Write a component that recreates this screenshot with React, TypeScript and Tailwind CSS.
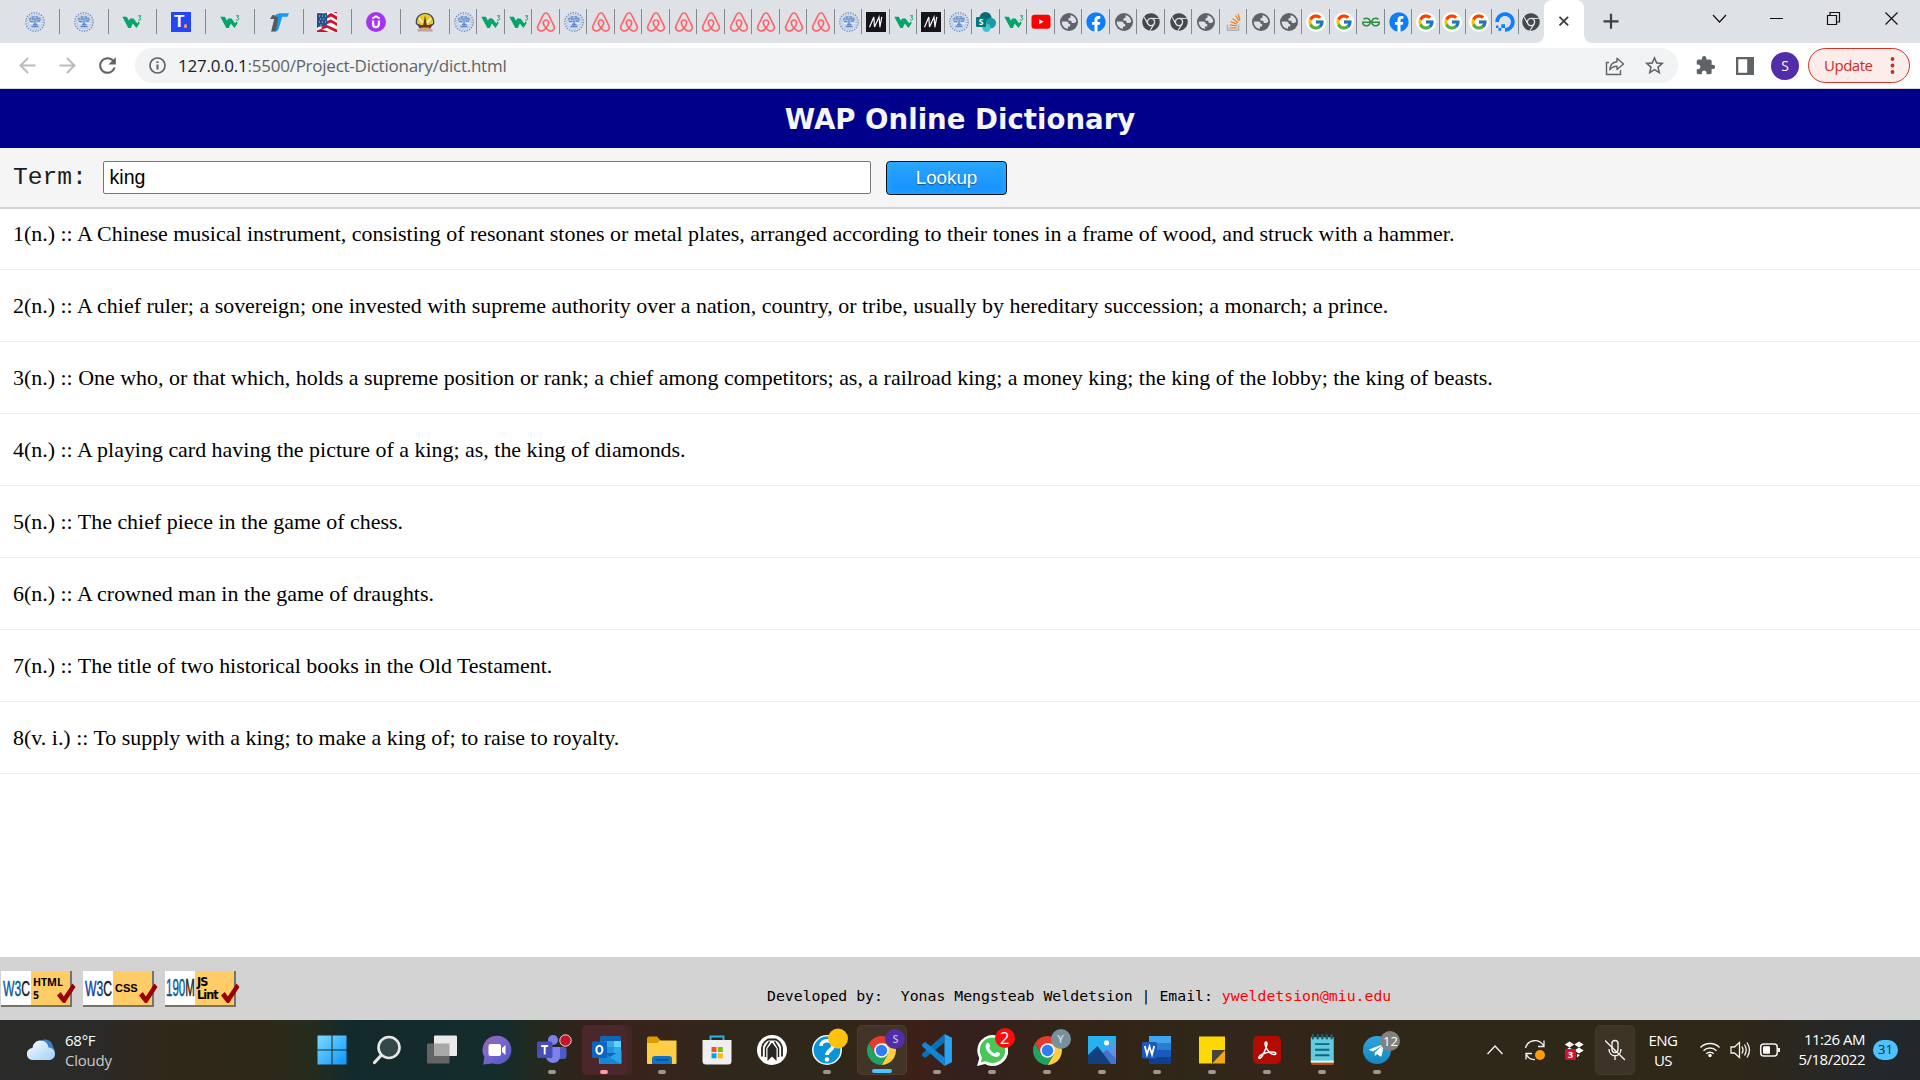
import React from "react";
import {
  FaAirbnb,
  FaChrome,
  FaDigitalOcean,
  FaFacebook,
  FaTelegramPlane,
} from "react-icons/fa";
import { FcGoogle } from "react-icons/fc";
import { SiGeeksforgeeks } from "react-icons/si";
import { MdExtension, MdRefresh, MdStarBorder } from "react-icons/md";

/* ---------- tab favicons ---------- */

const Seal = () => (
  <svg viewBox="0 0 20 20" className="size-5" fill="none" stroke="#6c92d0">
    <circle cx="10" cy="10" r="6.8" fill="#cbd7ec" stroke="none" />
    <circle cx="10" cy="10" r="9.200" strokeWidth="1.400" strokeDasharray="1.400 1.200" />
    <circle cx="10" cy="10" r="7.400" strokeWidth="1" strokeDasharray="1 1.400" opacity=".6" />
    <path d="M4.500 8.500c0-2 2-3.800 5-3.800s5.800 1.400 5.800 3.500" strokeWidth="1.500" strokeDasharray="3 .8" />
    <path d="M5 9.500h3.500M11.500 9h3.500M10 6v7.500M6.500 7h2.500M11 6.800h3M6.500 14.500h7M8 12.500h4.500" strokeWidth="1.300" stroke="#5f88cb" />
    <path d="M5 11.500h3M12.500 11.500h3" strokeWidth="1.200" stroke="#eef2f9" />
  </svg>
);

const W3 = () => (
  <svg viewBox="0 0 20 20" className="size-5">
    <path d="M.3 4.800h4.500l2.200 4 1-2.300h3.500l3.800 5 1.200-2.200 1.200 1.800-3.200 5-3.700-4.600-2 4.600h-2.500z" fill="#04a46c" />
    <path d="M16.200 3.800h2.600l-1.300 1.700c1.500 0 1.800 2.600-.1 2.600-.6 0-1-.1-1.300-.5" fill="none" stroke="#04a46c" strokeWidth="1" />
  </svg>
);

const TDot = () => (
  <span className="relative flex size-5 items-center justify-center bg-[#2545fb] pr-1 font-['Liberation_Sans'] text-[17px] leading-none font-bold text-white">
    T
    <span className="absolute right-1 bottom-1 size-[3.500px] rounded-full bg-[#ffa312]" />
  </span>
);

const BlueT = () => (
  <svg viewBox="0 0 20 20" className="size-5">
    <path d="M2.500 4.500C3 3 4 2.500 6 3.500L9 6 7 19.500H2.200L5.200 7H1z" fill="#555c63" />
    <path d="M6 3.500C8 1.500 10 1.200 12 1.200h8l-1.500 3.600h-5.200L10 15.500c-.8 3-2 4-4.500 4L9.300 6.500z" fill="#169cf4" />
    <path d="m6.500 4 3 1.500L7 18.500l-4.500 1z" fill="#555c63" />
  </svg>
);

const Flag = () => (
  <svg viewBox="0 0 20 20" className="size-5">
    <rect width="20" height="20" fill="#f7f3f4" />
    <path d="M10 3.500 14 1l6 3.500V8l-6-3.500-4 2zM10 9l4-1.500 6 3.500v3l-6-3.500-4 1.500zM16 0h4v1.500zM5 14.500l5-1.500 10 4.500V20h-1.500L10 15.800 4 17.500zM0 18.500l4-1.500 8 3H0z" fill="#c9142b" />
    <path d="M0 1.500C4 0 6 2.500 10 .5V13c-3 2.500-6 0-10 3z" fill="#24538c" />
    <path d="M2 4h.8M5 4h.8M8 4h.8M3.500 7h.8M6.500 7h.8M2 10h.8M5 10h.8M8 10h.8M3.500 13h.8" stroke="#fff" strokeWidth="1" />
  </svg>
);

const Udemy = () => (
  <svg viewBox="0 0 20 20" className="size-5">
    <circle cx="10" cy="10" r="10" fill="#a435f0" />
    <path d="M6.300 6.500 10 4.200l3.700 2.300" fill="none" stroke="#fff" strokeWidth="1.600" />
    <path d="M7.100 8.500v3.800c0 3.800 5.800 3.800 5.800 0V8.500" fill="none" stroke="#fff" strokeWidth="2.200" />
  </svg>
);

const Emblem = () => (
  <svg viewBox="0 0 20 20" className="size-5">
    <path d="M.8 12C0 5 4 1 10 1s10 4 9.200 11l-3 2.500H4z" fill="#3c4560" />
    <path d="M2 11.500C1.500 6 5 2 10 2s8.500 4 8 9.500l-4 1.500H6z" fill="#eacb2e" />
    <path d="M10 3.500 11.800 13H8.200z" fill="#6d3b1d" />
    <path d="M4 6l4 5M16 6l-4 5" stroke="#fbf6c5" strokeWidth="1.500" />
    <path d="M3 13h14l-1.500 3.500h-11z" fill="#7a2d20" />
    <path d="M2.500 18.300h15" stroke="#b9a7a0" strokeWidth="2.500" />
    <path d="M6 15.500h8v2H6z" fill="#d9a36a" />
  </svg>
);

const MBox = () => (
  <svg viewBox="0 0 20 20" className="size-5">
    <rect width="20" height="20" fill="#15141a" />
    <path d="M3.500 15.300 7.800 5l.7 10L13 5l1 10.300M15.800 4.800l-2 10.500" fill="none" stroke="#fff" strokeWidth="1.200" />
  </svg>
);

const SharePoint = () => (
  <svg viewBox="0 0 20 20" className="size-5">
    <circle cx="9.500" cy="6" r="6" fill="#036c70" />
    <circle cx="14.800" cy="11" r="5.200" fill="#1a9ba1" />
    <circle cx="10.500" cy="15.800" r="4.200" fill="#37c6d0" />
    <rect y="5" width="10" height="10" rx="1" fill="#03787c" />
    <text x="5" y="13" textAnchor="middle" fontSize="8.500" fontWeight="700" fontFamily="Open Sans, sans-serif" fill="#fff">S</text>
  </svg>
);

const YouTube = () => (
  <svg viewBox="0 0 20 20" className="size-5">
    <rect x=".5" y="2.800" width="19" height="14" rx="3" fill="#f00" />
    <path d="M8.200 7.300v5L12.600 9.800z" fill="#fff" />
  </svg>
);

const Globe = () => (
  <svg viewBox="0 0 20 20" className="size-5">
    <circle cx="10" cy="10" r="9" fill="#5f6368" />
    <path d="M2.800 9.500h4.400c1.800 0 2.600 1.200 2.600 2.500h1.400v2.400H9v2.300C5.500 16.700 2.600 13.500 2.800 9.500z" fill="#dee1e6" />
    <path d="M11.500 3.200c3.300.6 5.800 3.300 5.800 6.600-1 .9-1.800 1.200-3 1.200-1.600 0-2-.8-2-2.300H9.500V6.300c1.500 0 2-.6 2-1.600z" fill="#dee1e6" />
  </svg>
);
const Airbnb = () => <FaAirbnb className="size-[22px] stroke-[#ff5a60] stroke-[8] text-[#ff5a60]" />;
const Facebook = () => (
  <span className="flex size-5 items-center justify-center rounded-full bg-white">
    <FaFacebook className="size-5 text-[#0f7df5]" />
  </span>
);
const ChromeGray = () => <FaChrome className="size-[18px] text-[#45494d]" />;
const Stack = () => (
  <svg viewBox="0 0 20 20" className="size-5" fill="none">
    <path d="M3.500 12.500v5.700h11v-5.700" stroke="#a9b3bf" strokeWidth="1.500" />
    <path d="M5.500 15.800h7M5.700 12.900l6.900.9M6.700 9.700l6.300 2.500M8.700 6.500l5.300 4.200M11.500 3.500l3.700 5.700M14 1.800l2 6.500" stroke="#f48024" strokeWidth="1.300" />
  </svg>
);
const Google = () => (
  <span className="flex size-5 items-center justify-center rounded-full bg-white">
    <FcGoogle className="size-[18px]" />
  </span>
);
const Geeks = () => <SiGeeksforgeeks className="size-[18px] text-[#2f8d46]" />;
const Ocean = () => <FaDigitalOcean className="size-5 text-[#0f7fff]" />;

const wideTabs = [Seal, Seal, W3, TDot, W3, BlueT, Flag, Udemy, Emblem];
const narrowTabs = [
  Seal, W3, W3, Airbnb, Seal, Airbnb, Airbnb, Airbnb, Airbnb, Airbnb, Airbnb, Airbnb, Airbnb, Airbnb,
  Seal, MBox, W3, MBox, Seal, SharePoint, W3, YouTube, Globe, Facebook, Globe, ChromeGray, ChromeGray,
  Globe, Stack, Globe, Globe, Google, Google, Geeks, Facebook, Google,
];
const tightTabs = [Google, Google, Ocean];

function Tab({ Icon, size }: { Icon: React.FC; size: string }) {
  return (
    <div className={`flex h-[25px] shrink-0 items-center justify-center border-r border-[#85888c] ${size}`}>
      <Icon />
    </div>
  );
}

function TabStrip() {
  return (
    <div className="flex h-[43px] bg-[#dee1e6] pl-[11px]">
      <div className="flex items-start pt-[9px]">
        {wideTabs.map((I, i) => <Tab key={i} Icon={I} size="w-[48.750px]" />)}
        {narrowTabs.map((I, i) => <Tab key={i} Icon={I} size="w-[27.500px] pl-[1px]" />)}
        {tightTabs.map((I, i) => <Tab key={i} Icon={I} size="w-[26.300px]" />)}
        <div className="flex h-[25px] w-[25.500px] items-center justify-center"><ChromeGray /></div>
      </div>
      <svg width="60" height="43" viewBox="0 0 60 43" className="-ml-[10px] w-[60px] shrink-0">
        <path d="M0 43c7 0 10-3 10-10V9c0-6 3-9 9-9h22c6 0 9 3 9 9v24c0 7 3 10 10 10z" fill="#fff" />
        <path d="m25.500 16.800 8.600 8.600m0-8.600-8.600 8.600" stroke="#3c4043" strokeWidth="1.900" />
      </svg>
      <svg width="326" height="43" viewBox="1594 0 326 43" fill="none" className="shrink-0">
        <path d="M1603.500 21.300h15M1611 13.800v15" stroke="#3c4043" strokeWidth="2.200" />
        <path d="m1713 15 6.500 7 6.500-7M1770 18.500h13" stroke="#111" strokeWidth="1.200" />
        <path d="M1827.500 15.500h9v9h-9zM1830 15v-2.500h9.500v9.500H1837" stroke="#111" strokeWidth="1.200" />
        <path d="m1885.500 12.500 12 12m0-12-12 12" stroke="#111" strokeWidth="1.200" />
      </svg>
    </div>
  );
}

function Toolbar() {
  return (
    <div className="flex h-[46px] items-center border-b border-[#d5d7db] bg-white pl-[17px]">
      <svg width="62" height="24" viewBox="17 0 62 24" fill="none" stroke="#babcbe" strokeWidth="1.900" className="shrink-0">
        <path d="M35.500 11.500H20.500M28 4l-7.500 7.500L28 19M59.500 11.500h15M67 4l7.500 7.500L67 19" />
      </svg>
      <MdRefresh className="ml-[16px] size-[25px] text-[#5f6368]" />
      <div className="ml-[15px] flex h-[35px] w-[1543px] items-center rounded-full bg-[#f1f3f4] pr-[12px] pl-[14px]">
        <svg width="17" height="17" viewBox="0 0 17 17" fill="none" stroke="#5f6368" strokeWidth="1.700">
          <circle cx="8.500" cy="8.500" r="7.500" />
          <path d="M8.500 7.500v5M8.500 4.300v1.700" strokeWidth="2" />
        </svg>
        <span className="ml-[12px] font-['Open_Sans'] text-[17px] tracking-[-0.245px] whitespace-pre text-[#5f6368]">
          <span className="text-[#202124]">127.0.0.1</span>:5500/Project-Dictionary/dict.html
        </span>
        <svg width="20" height="20" viewBox="0 0 20 20" fill="none" stroke="#5f6368" strokeWidth="1.400" className="ml-auto">
          <path d="M4 6.500H1.500v12h14V14" />
          <path d="M12 2.200 18.500 8 12 13.500v-3.300c-3.500 0-5.500 1-7.200 3.600.3-4.500 2.700-7.600 7.200-8z" strokeLinejoin="round" />
        </svg>
        <MdStarBorder className="ml-[18px] size-[23px] text-[#5f6368]" />
      </div>
      <MdExtension className="ml-[17px] size-[21px] text-[#5f6368]" />
      <svg width="18" height="18" viewBox="0 0 18 18" className="ml-[20px]">
        <path d="M0 0h18v18H0zM2.300 2.300v13.400h8.900V2.300z" fill="#5f6368" fillRule="evenodd" />
      </svg>
      <div className="ml-[17px] flex size-7 items-center justify-center rounded-full bg-[#512da8] font-['Open_Sans'] text-[14px] text-white">S</div>
      <div className="ml-[9px] flex h-[35px] w-[102px] items-center rounded-full border-[1.500px] border-[#d93025] bg-[#fcecea] pl-[15px] text-[#d12b21]">
        <span className="w-[62px] pb-px font-['Open_Sans'] text-[15px] tracking-[-0.480px]">Update</span>
        <svg width="5" height="17" viewBox="0 0 5 17" className="ml-[4px] fill-[#d12b21]">
          <circle cx="2.500" cy="2" r="1.900" /><circle cx="2.500" cy="8.500" r="1.900" /><circle cx="2.500" cy="15" r="1.900" />
        </svg>
      </div>
    </div>
  );
}

/* ---------- dictionary page ---------- */

const entries = [
  "1(n.) :: A Chinese musical instrument, consisting of resonant stones or metal plates, arranged according to their tones in a frame of wood, and struck with a hammer.",
  "2(n.) :: A chief ruler; a sovereign; one invested with supreme authority over a nation, country, or tribe, usually by hereditary succession; a monarch; a prince.",
  "3(n.) :: One who, or that which, holds a supreme position or rank; a chief among competitors; as, a railroad king; a money king; the king of the lobby; the king of beasts.",
  "4(n.) :: A playing card having the picture of a king; as, the king of diamonds.",
  "5(n.) :: The chief piece in the game of chess.",
  "6(n.) :: A crowned man in the game of draughts.",
  "7(n.) :: The title of two historical books in the Old Testament.",
  "8(v. i.) :: To supply with a king; to make a king of; to raise to royalty.",
];

function Validator({ left, leftClass, children }: { left: React.ReactNode; leftClass: string; children: React.ReactNode }) {
  return (
    <div className="relative flex h-9 w-[71px] border-r-2 border-b-2 border-[#77736b] bg-[#ffcc66]">
      <div className="flex h-full w-[30px] shrink-0 items-center bg-white pl-[2px]">
        <span className={`inline-block w-[26px] origin-left font-['Liberation_Sans'] whitespace-nowrap ${leftClass}`}>{left}</span>
      </div>
      {children}
      <svg width="19" height="21" viewBox="0 0 19 21" className="absolute top-3 -right-[6px]">
        <path d="M0 12.500 3.800 9l3 4.500L15.500.5l3 3.500L8 20H6z" fill="#990000" />
      </svg>
    </div>
  );
}

function Page() {
  return (
    <>
      <header className="flex h-[59px] items-center justify-center bg-[#00008b] pt-[3px]">
        <h1 className="font-['DejaVu_Sans'] text-[27.600px] font-bold whitespace-nowrap text-[#f5f5f5]">WAP Online Dictionary</h1>
      </header>
      <div className="flex h-[61px] items-center border-b-2 border-[#d3d3d3] bg-[#f5f5f5] pl-[13px]">
        <label className="w-[90px] pt-[2px] font-['Liberation_Mono'] text-[24.600px] text-[#1c1c1c]">Term:</label>
        <div className="flex h-[33px] w-[768px] items-center rounded-[2px] border border-[#767676] bg-white pt-px pl-[5.500px] font-['Liberation_Sans'] text-[19.600px] text-black">king</div>
        <button className="ml-[15px] h-[34px] w-[121px] rounded-[4px] border border-[#0b1116] bg-linear-to-b from-[#2ba4fb] to-[#1590ff] pt-px font-['Liberation_Sans'] text-[18.750px] text-white shadow-[inset_0_0_7px_#27b1ff] text-shadow-[0_1px_1px_rgba(0,0,0,0.450)]">
          Lookup
        </button>
      </div>
      <main className="h-[748px] bg-white">
        {entries.map((e, i) => (
          <p key={i} className={`border-b border-[#ececec] pl-[13px] font-['Liberation_Serif'] text-[21.940px] leading-[28px] whitespace-nowrap text-black ${i ? "h-[71.900px] pt-[22px]" : "h-[61.400px] pt-[11px]"}`}>
            {e}
          </p>
        ))}
      </main>
      <footer className="flex h-[63px] bg-[#d3d3d3]">
        <div className="flex gap-[11px] pt-[14px] pl-[1px]">
          <Validator leftClass="scale-x-[0.550] text-[22px] text-[#0b5a9c] [-webkit-text-stroke:0.5px_currentColor]" left={<>W3<span className="text-[#222]">C</span></>}>
            <span className="pt-[5px] pl-[2px] font-['Open_Sans'] text-[10.500px] leading-[13px] font-bold text-black">HTML<br />5</span>
          </Validator>
          <Validator leftClass="scale-x-[0.550] text-[22px] text-[#0f3f9c] [-webkit-text-stroke:0.5px_currentColor]" left={<>W3<span className="text-[#222]">C</span></>}>
            <span className="pt-[7px] pl-[2px] font-['Liberation_Sans'] text-[11px] leading-[20px] font-bold text-black">CSS</span>
          </Validator>
          <Validator leftClass="scale-x-[0.500] text-[23px] -ml-px text-[#0b5a9c] [-webkit-text-stroke:0.5px_currentColor]" left={<>190<span className="text-[#222]">M</span></>}>
            <span className="pt-[4px] pl-[2px] font-['DejaVu_Sans_Condensed'] text-[12.500px] leading-[13px] font-bold tracking-[-0.900px] text-black">JS<br />Lint</span>
          </Validator>
        </div>
        <div className="ml-[531px] pt-[29px] font-['DejaVu_Sans_Mono'] text-[14.820px] leading-[20px] whitespace-pre text-black">
          {"Developed by:  Yonas Mengsteab Weldetsion | Email: "}
          <span className="text-[#ff0000]">yweldetsion@miu.edu</span>
        </div>
      </footer>
    </>
  );
}

/* ---------- taskbar ---------- */

const Start = () => (
  <svg viewBox="0 0 30 30" className="size-[30px]">
    <defs>
      <linearGradient id="win" gradientUnits="userSpaceOnUse" x1="0" y1="0" x2="30" y2="30">
        <stop stopColor="#7fdcff" /><stop offset="1" stopColor="#0a93ff" />
      </linearGradient>
    </defs>
    <path d="M.5.500h14v14H.5zM15.500.500h14v14h-14zM.5 15.500h14v14H.5zM15.500 15.500h14v14h-14z" fill="url(#win)" />
  </svg>
);

const Search = () => (
  <svg viewBox="0 0 30 30" className="size-[30px]" fill="none" stroke="#e8e8e8" strokeLinecap="round">
    <circle cx="17" cy="12.500" r="10.500" strokeWidth="2.600" fill="#34474a" />
    <path d="m9 20.500-6.500 7" strokeWidth="3.200" />
  </svg>
);

const TaskView = () => (
  <svg viewBox="0 0 30 30" className="size-[30px]">
    <rect y="8.500" width="22.500" height="20" rx="1" fill="#646464" />
    <rect x="7" y="0.500" width="23" height="20.500" rx="1" fill="#eaeaea" />
    <rect x="7" y="8.500" width="15.500" height="12.500" fill="#a8a8a8" />
  </svg>
);

const Chat = () => (
  <svg viewBox="0 0 30 30" className="size-[30px]">
    <defs>
      <linearGradient id="chat" x1="0" y1="0" x2="1" y2="1">
        <stop stopColor="#a2638f" /><stop offset=".35" stopColor="#7d68cf" /><stop offset="1" stopColor="#4f55c5" />
      </linearGradient>
    </defs>
    <path d="M15 .8a14.200 14.200 0 1 1-4.500 27.600L1.200 29.500 2.400 22A14.200 14.200 0 0 1 15 .8z" fill="url(#chat)" />
    <rect x="6.500" y="9" width="12.500" height="12" rx="2" fill="#fff" />
    <path d="m20 13 3.500-3v10L20 17z" fill="#fff" />
  </svg>
);

const Teams = () => (
  <svg viewBox="0 0 30 30" className="size-[30px] overflow-visible">
    <circle cx="16" cy="5" r="5" fill="#7b83eb" />
    <rect x="20" y="12" width="9.500" height="12" rx="3" fill="#5059c9" />
    <path d="M9 12h14v9c0 9-13 9-14 1z" fill="#7b83eb" />
    <rect x="0" y="6.500" width="15.500" height="16.500" rx="1.500" fill="#464eb8" />
    <path d="M4.200 11h7M7.700 11v8.500" stroke="#fff" strokeWidth="1.900" />
    <circle cx="28.500" cy="5.500" r="5.700" fill="#c4132b" stroke="#f2dede" strokeWidth="1" />
  </svg>
);

const Outlook = () => (
  <svg viewBox="0 0 30 30" className="size-[30px]">
    <rect x="8" y="1" width="21" height="22" rx="1.500" fill="#1066b5" />
    <path d="M8 6h7v6H8z" fill="#1f88d8" /><path d="M15 6h7v6h-7z" fill="#32a9e7" /><path d="M22 6h7v6h-7z" fill="#5ed4fb" />
    <path d="M15 12h7v6h-7z" fill="#2392dc" /><path d="M22 12h7v6h-7z" fill="#32a9e7" />
    <path d="M7 28.500V15l11 7 11.500-7v13a1 1 0 0 1-1 1H8z" fill="#2aa5ec" />
    <path d="M7 16l22 13H8z" fill="#1487d9" />
    <rect y="6.500" width="15" height="16.500" rx="1.500" fill="#0a66c2" />
    <ellipse cx="7.400" cy="14.700" rx="3" ry="4" fill="none" stroke="#fff" strokeWidth="2.100" />
  </svg>
);

const Explorer = () => (
  <svg viewBox="0 0 30 30" className="size-[30px]">
    <path d="M0 3.500Q0 1.500 2 1.500h8l3.500 4V10H0z" fill="#dc9c05" />
    <path d="M0 8 10 8l3-2.500h16.500V28q0 1-1 1H1q-1 0-1-1z" fill="#fecf45" />
    <path d="M5 29v-5q0-3 3-3h14q3 0 3 3v5z" fill="#1173c5" />
    <path d="M8.500 24.800h13" stroke="#0c4a86" strokeWidth="1.300" />
  </svg>
);

const Store = () => (
  <svg viewBox="0 0 30 30" className="size-[30px]">
    <path d="M8.500 6V1.500h13V6" fill="none" stroke="#27b3ea" strokeWidth="1.900" />
    <path d="M.5 5h29v21q0 3.500-3.500 3.500H4Q.5 29.500.5 26z" fill="#efefef" />
    <path d="M9.500 12h5v5h-5z" fill="#f25022" /><path d="M15.800 12h5v5h-5z" fill="#7fba00" />
    <path d="M9.500 18.300h5v5h-5z" fill="#00a4ef" /><path d="M15.800 18.300h5v5h-5z" fill="#ffb900" />
  </svg>
);

const Dome = () => (
  <svg viewBox="0 0 30 30" className="size-[30px]" fill="none">
    <circle cx="15" cy="15" r="15" fill="#fff" />
    <path d="M5 21.500V13C5.500 9 8 6 11 4.500h8c3 1.500 5.500 4.500 6 8.500v8.500" stroke="#292522" strokeWidth="1.800" />
    <path d="M8.500 22V13L12.500 6.500M21.500 22V13L17.500 6.500" stroke="#292522" strokeWidth="1.500" />
    <path d="M15 7.500 19.500 13.500V26L15 21.500 10.500 26V13.500z" fill="#292522" />
  </svg>
);

const Help = () => (
  <svg viewBox="0 0 30 30" className="size-[30px] overflow-visible">
    <circle cx="15" cy="15" r="14.200" fill="#0c94d8" stroke="#eef6fa" strokeWidth="1.600" />
    <path d="M9 11c0-7 12-7 12-.5 0 5-6 4.500-6 9.500" fill="none" stroke="#fff" strokeWidth="3.600" />
    <circle cx="15" cy="24.500" r="2.300" fill="#fff" />
    <circle cx="26" cy="3.500" r="10" fill="#ffc20e" />
  </svg>
);

function Badge({ text, bg }: { text: string; bg: string }) {
  return (
    <span className={`absolute -top-[7px] -right-[9px] flex size-5 items-center justify-center rounded-full font-['Open_Sans'] leading-none ${bg}`}>{text}</span>
  );
}

const ChromeLogo = () => (
  <svg viewBox="-22 -22 44 44" className="size-[29px]">
    <path d="M0-11h19.050A22 22 0 0 1 0 22L9.530 5.500z" fill="#ffcd40" />
    <path d="M9.530 5.500 0 22A22 22 0 0 1-19.050-11L-9.530 5.500z" fill="#1fa463" />
    <path d="M-9.530 5.500-19.050-11A22 22 0 0 1 19.050-11H0z" fill="#e33b2e" />
    <circle r="11" fill="#f5f5f5" />
    <circle r="8.600" fill="#2f7df0" />
  </svg>
);

const ChromeS = () => (
  <div className="relative"><ChromeLogo /><Badge text="S" bg="bg-[#512da8] text-[11px] font-semibold text-[#c4b8e6]" /></div>
);
const ChromeY = () => (
  <div className="relative"><ChromeLogo /><Badge text="Y" bg="bg-[#78909c] text-[11px] font-semibold text-[#cfdbe0]" /></div>
);

const VSCode = () => (
  <svg viewBox="0 0 30 30" className="size-[32px]">
    <path d="M22 0v8L4 22.500 1 20.500v-2z" fill="#0a71b9" />
    <path d="M22 30v-8L4 7.500 1 9.500v2z" fill="#1287d0" />
    <path d="M22 0 29 3.500v23L22 30z" fill="#2aa4f2" />
  </svg>
);

const WhatsApp = () => (
  <div className="relative">
    <svg viewBox="0 0 30 30" className="size-[31px]">
      <path d="M15 0a15 15 0 1 1-7.200 28L0 30l2.200-7.600A15 15 0 0 1 15 0z" fill="#fff" />
      <circle cx="15" cy="14.800" r="12.300" fill="#49c85a" />
      <path d="M3.800 26.300 5 20.500l4.800 4.600z" fill="#49c85a" />
      <path d="M9 8.500c1.500-2 3-1 3.500 1.500.5 1.800-1 2-.5 3 1 2.200 3 4 5 4.800 1 .2 1.500-2 3-1.300 2.500 1 3 1.500 1.500 3.500-2 2.300-6 1.500-9.500-2-3.500-3.300-4.500-7-3-9.500z" fill="#fff" />
    </svg>
    <Badge text="2" bg="mr-[2px] bg-[#f80d0d] text-[17px] text-white" />
  </div>
);

const Photos = () => (
  <svg viewBox="0 0 30 30" className="size-[30px]">
    <defs>
      <linearGradient id="sky" x1="0" y1="0" x2="1" y2="1"><stop offset=".45" stopColor="#25b2ee" /><stop offset="1" stopColor="#a36be0" /></linearGradient>
    </defs>
    <rect x="1" y="1" width="28" height="28" fill="url(#sky)" />
    <path d="M15 19 20 14.500 29 24v5H15z" fill="#3f76cf" />
    <path d="M1 20 10.500 11 24 29H1z" fill="#123f7d" />
    <circle cx="19.500" cy="7.800" r="2.600" fill="#fff" />
  </svg>
);

const Word = () => (
  <svg viewBox="0 0 30 30" className="size-[30px]">
    <path d="M7 1h22v7H7z" fill="#41a5ee" /><path d="M7 8h22v7H7z" fill="#2b7cd3" /><path d="M7 15h22v7H7z" fill="#185abd" /><path d="M7 22h22v7H7z" fill="#103f91" />
    <rect y="7" width="15" height="16.500" rx="1.500" fill="#185abd" />
    <path d="m2.800 11 2.200 8.500 2.500-8 2.500 8 2.200-8.500" fill="none" stroke="#fff" strokeWidth="1.800" />
  </svg>
);

const Sticky = () => (
  <svg viewBox="0 0 30 30" className="size-[30px]">
    <path d="M2 1.500h26V15L15 28.500H2z" fill="#fed803" />
    <path d="M28 15v13.500H15z" fill="#f6a90a" />
    <path d="M15 15h13L15 28.500z" fill="#48433c" />
  </svg>
);

const Acrobat = () => (
  <svg viewBox="0 0 30 30" className="size-[30px]">
    <rect x="1" y="1" width="28" height="28" rx="5" fill="#b30b00" />
    <path d="M14 7c-2.500 0 0 7 3.500 10.500 3 2.500 6.500 2.800 6.300.8-.3-2-8-1.500-13 .7-4.500 2-4.800 4.500-3 4.200C10.500 22.500 17.500 7 14 7z" fill="none" stroke="#fff" strokeWidth="1.500" />
  </svg>
);

const Notepad = () => (
  <svg viewBox="0 0 30 30" className="size-[32px]">
    <path d="M5 26h21v3H5z" fill="#b2520f" />
    <path d="M4.500 3h21.500v23.500H4.500z" fill="#63cbe0" />
    <path d="M4.500 25h21.500v1.800H4.500z" fill="#f2f2f2" />
    <path d="M6.500 1v3M11 1v3M15.300 1v3M19.500 1v3M24 1v3" stroke="#195f70" strokeWidth="2.200" strokeLinecap="round" />
    <path d="M8.500 9.500h13.500M8.500 14.800h13.500M8.500 20h13.500" stroke="#12677b" strokeWidth="1.800" />
  </svg>
);

const Telegram = () => (
  <div className="relative">
    <div className="flex size-[28px] items-center justify-center rounded-full bg-linear-to-b from-[#2ba6de] to-[#1688c4]">
      <FaTelegramPlane className="mr-[2px] size-[17px] text-white" />
    </div>
    <Badge text="12" bg="mt-[2px] bg-[#80827f] text-[13px] text-white" />
  </div>
);

type TaskApp = { icon: React.FC; bar?: string; box?: string };
const apps: TaskApp[] = [
  { icon: Start }, { icon: Search }, { icon: TaskView }, { icon: Chat },
  { icon: Teams, bar: "w-2 bg-[#9a9a94]" },
  { icon: Outlook, bar: "w-2 bg-[#ff99a4]", box: "bg-[#4a272b] shadow-[5px_0_0_#43262a]" },
  { icon: Explorer, bar: "w-2 bg-[#9c9890]" },
  { icon: Store }, { icon: Dome },
  { icon: Help, bar: "w-2 bg-[#9c9890]" },
  { icon: ChromeS, bar: "w-5 bg-[#4cc2ff]", box: "bg-[#433428] border border-[#4b3d31]" },
  { icon: VSCode, bar: "w-2 bg-[#a19690]" },
  { icon: WhatsApp, bar: "w-2 bg-[#a19690]" },
  { icon: ChromeY, bar: "w-2 bg-[#a19690]" },
  { icon: Photos, bar: "w-2 bg-[#a19690]" },
  { icon: Word, bar: "w-2 bg-[#a19690]" },
  { icon: Sticky, bar: "w-2 bg-[#a19690]" },
  { icon: Acrobat, bar: "w-2 bg-[#a19690]" },
  { icon: Notepad, bar: "w-2 bg-[#a19690]" },
  { icon: Telegram, bar: "w-2 bg-[#a19690]" },
];

function Taskbar() {
  return (
    <div className="flex h-[60px] items-center bg-[linear-gradient(90deg,#2a2a2a_0px,#2b2a28_100px,#30281a_160px,#2e2819_260px,#262c1c_310px,#122a2d_350px,#142c2b_500px,#24291f_540px,#34221a_590px,#38241a_650px,#2f271a_730px,#2f271a_840px,#3d2018_920px,#33201f_975px,#342418_1040px,#2f2719_1200px,#332519_1270px,#2f2718_1400px,#2f2718_1740px,#24282a_1860px,#22272a_1920px)] font-['Open_Sans'] text-white">
      <div className="flex w-[304px] items-center pl-[27px]">
        <svg width="28" height="22" viewBox="0 0 28 22">
          <defs><linearGradient id="cl" x1="0" y1="0" x2="1" y2="1"><stop stopColor="#fafdff" /><stop offset="1" stopColor="#9fd0f7" /></linearGradient></defs>
          <path d="M14 2c6-4 12 1 12 6 3 3 2 8-2 10z" fill="#3f7fc4" />
          <path d="M6 21a6 6 0 0 1-.5-12C6 4 9.500 1.500 13.500 1.500c4.500 0 7.500 3 8 7C26 9 28 12 28 15c0 3.500-2.500 6-6 6z" fill="url(#cl)" />
        </svg>
        <div className="ml-[10px] text-[15px] leading-[20px] tracking-[-0.250px]">
          <div>68°F</div>
          <div className="text-[#c9c9c9]">Cloudy</div>
        </div>
      </div>
      <div className="flex">
        {apps.map(({ icon: I, bar, box }, i) => (
          <div key={i} className="flex w-[55.050px] justify-center">
            <div className={`relative flex h-[50px] items-center justify-center rounded-[5px] ${i === 5 ? "mr-[5px] w-[45px] pl-[5px]" : "w-[50px]"} ${box ?? ""}`}>
              <I />
              {bar && <span className={`absolute bottom-[1px] left-1/2 h-1 -translate-x-1/2 rounded-full ${bar}`} />}
            </div>
          </div>
        ))}
      </div>
      <div className="ml-auto flex h-full items-center">
        <svg width="108" height="60" viewBox="1487 1020 108 60" fill="none" stroke="#f2f2f2">
          <path d="m1487.500 1054 7.500-8 7.500 8" strokeWidth="1.400" />
          <path d="M1525.500 1048c2-8 13-10.500 18-2.500m.5-5v6h-6M1526 1059.500v-6h6m-5.500 1c1.500 3.500 5 5.300 8.500 5" strokeWidth="1.300" />
          <circle cx="1540" cy="1055" r="5" fill="#ff9b0c" stroke="none" />
          <g fill="#fff" stroke="none">
            <path d="m1569.500 1041.500 4.700 3-4.700 3-4.700-3zM1579 1041.500l4.700 3-4.700 3-4.700-3zM1579 1047.500l4.700 3-4.700 3-4.700-3zM1569.500 1047.500l4.700 3-4.700 3-4.700-3zM1577 1054l3 1-3 2.500z" />
          </g>
          <rect x="1565" y="1049" width="11" height="11" rx="1.500" fill="#d8102f" stroke="none" />
          <text x="1570.500" y="1057.500" textAnchor="middle" fontSize="9.500" fontWeight="700" fill="#fff" stroke="none">3</text>
        </svg>
        <div className="flex h-[50px] w-10 items-center justify-center rounded-[5px] border border-[#42392c] bg-[#3d3427]">
          <svg width="20" height="22" viewBox="0 0 20 22" fill="none" stroke="#f0f0f0" strokeWidth="1.400">
            <rect x="7" y="1.500" width="6" height="12" rx="3" />
            <path d="M4 10c0 9 12 9 12 0M10 17v4M0 1.500l20 19.500" />
          </svg>
        </div>
        <div className="w-[56px] text-center text-[15px] leading-5 tracking-[-0.500px]">ENG<br />US</div>
        <svg width="98" height="60" viewBox="1691 1020 98 60" fill="none" stroke="#f2f2f2" strokeWidth="1.500">
          <path d="M1700.500 1047.500a13.500 13.500 0 0 1 19 0M1703.500 1050.800a9.200 9.200 0 0 1 13 0M1706.300 1053.800a5.300 5.300 0 0 1 7.400 0" />
          <circle cx="1710" cy="1055.500" r="1.700" fill="#fff" stroke="none" />
          <path d="M1731 1047h3.500l5-4.500v15l-5-4.500h-3.500zM1742 1046.500q2 3.500 0 7M1744.500 1044.500q3.500 5.500 0 11M1747 1042.500q5 7.500 0 15" strokeWidth="1.300" />
          <rect x="1760.700" y="1044" width="16.500" height="12" rx="3" />
          <rect x="1763" y="1046.300" width="7" height="7.400" rx="1" fill="#fff" stroke="none" />
          <path d="M1779 1048v4" strokeWidth="2" />
        </svg>
        <div className="w-[76px] pb-[2px] text-right text-[15px] leading-5 tracking-[-0.500px] whitespace-nowrap">11:26 AM<br />5/18/2022</div>
        <div className="mr-[22px] ml-[8px] flex h-5 w-[25px] items-center justify-center rounded-full bg-[#4cc2ff] text-[13px] text-[#10262f]">31</div>
      </div>
    </div>
  );
}

export default function App() {
  return (
    <div className="flex h-[1080px] w-[1920px] flex-col overflow-hidden bg-white">
      <TabStrip />
      <Toolbar />
      <Page />
      <Taskbar />
    </div>
  );
}
